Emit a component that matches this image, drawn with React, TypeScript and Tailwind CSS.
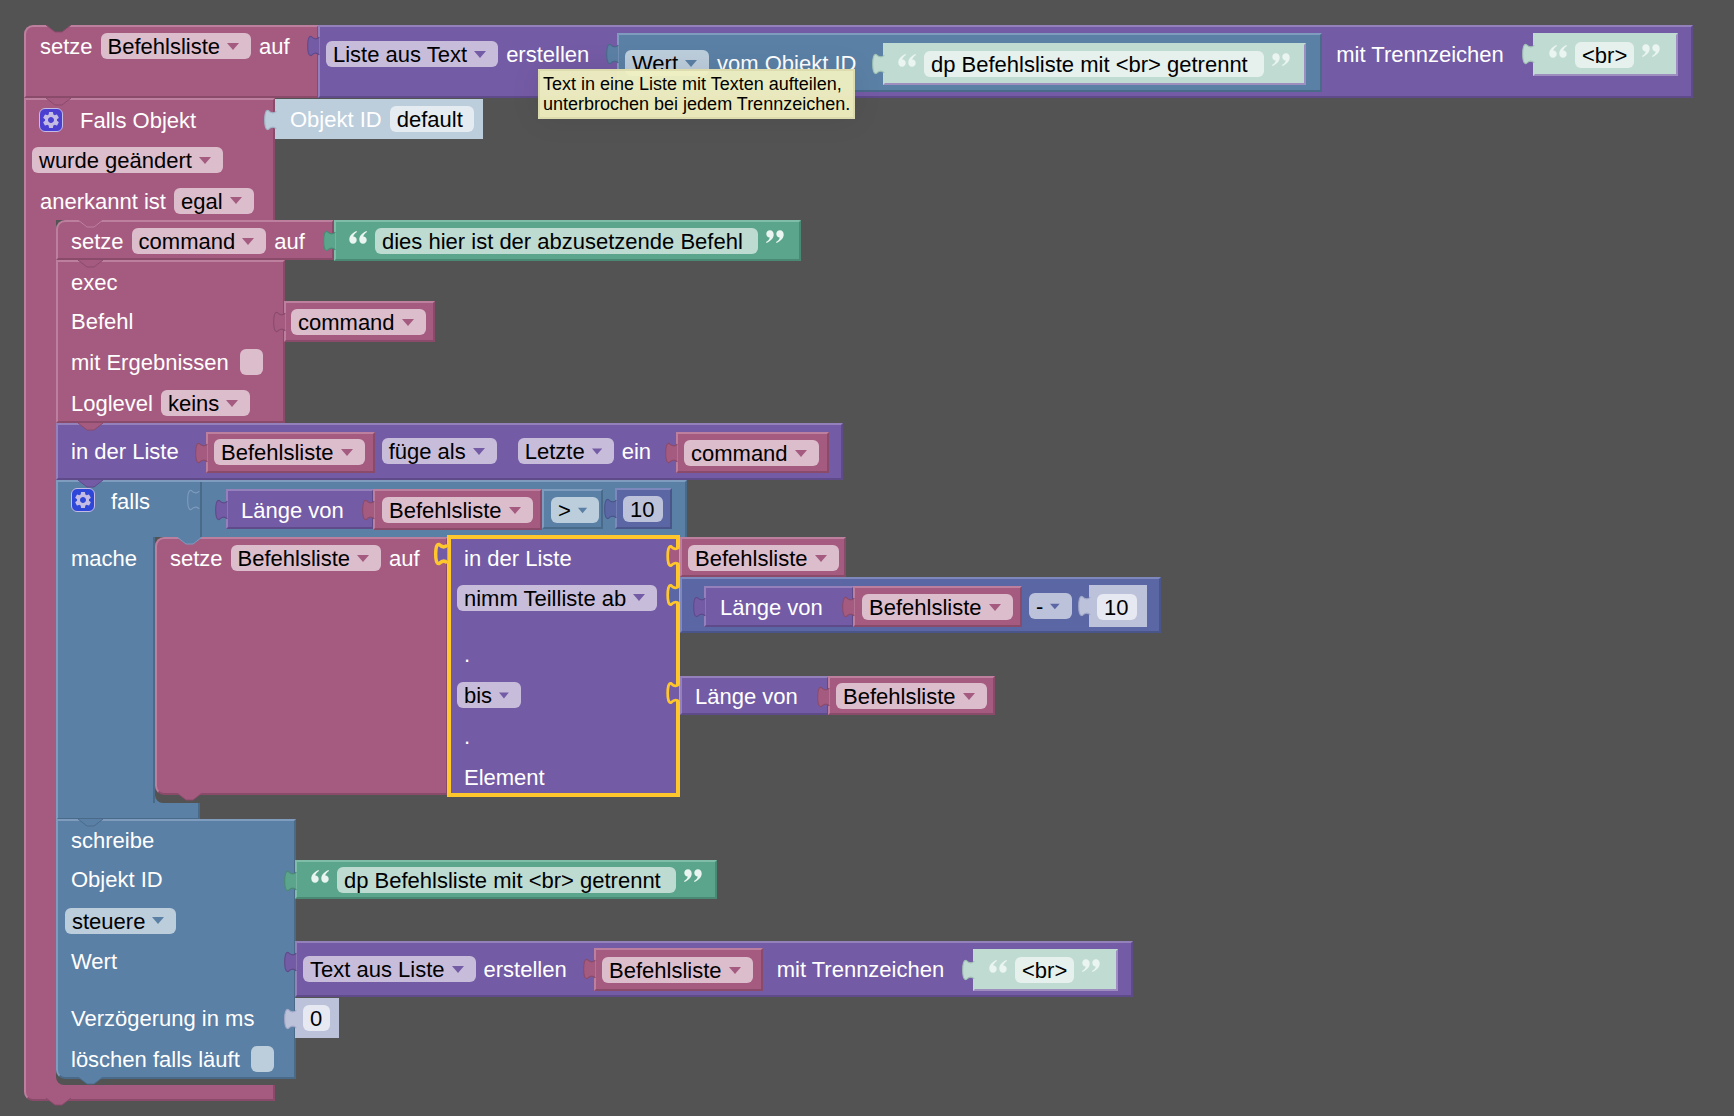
import type { ReactNode } from 'react'
import { MdSettings } from 'react-icons/md'

type Tone = 'pink' | 'purple' | 'blue' | 'green' | 'math' | 'paleBlue' | 'paleGreen' | 'paleMath'

const tones: Record<Tone, string> = {
  pink: 'bg-[#a55b80] border-t-[#bd7f9e] border-l-[#bd7f9e] border-r-[#8a4b6b] border-b-[#8a4b6b]',
  purple: 'bg-[#745ba5] border-t-[#9480bb] border-l-[#9480bb] border-r-[#5f4a8a] border-b-[#5f4a8a]',
  blue: 'bg-[#5b80a5] border-t-[#7f9bbd] border-l-[#7f9bbd] border-r-[#4a6a8a] border-b-[#4a6a8a]',
  green: 'bg-[#5ba58c] border-t-[#7fbda8] border-l-[#7fbda8] border-r-[#4a8a74] border-b-[#4a8a74]',
  math: 'bg-[#5b67a5] border-t-[#7f88bd] border-l-[#7f88bd] border-r-[#4a558a] border-b-[#4a558a]',
  paleBlue: 'bg-[#bccddc] border-t-[#bccddc] border-l-[#bccddc] border-r-[#bccddc] border-b-[#bccddc]',
  paleGreen: 'bg-[#c0dcd2] border-t-[#c0dcd2] border-l-[#c0dcd2] border-r-[#9d8ebf] border-b-[#9d8ebf]',
  paleMath: 'bg-[#bdc2db] border-t-[#bdc2db] border-l-[#bdc2db] border-r-[#bdc2db] border-b-[#bdc2db]',
}

const fills: Record<Tone, string> = {
  pink: '#a55b80',
  purple: '#745ba5',
  blue: '#5b80a5',
  green: '#5ba58c',
  math: '#5b67a5',
  paleBlue: '#bccddc',
  paleGreen: '#c0dcd2',
  paleMath: '#bdc2db',
}

const edges: Record<Tone, string> = {
  pink: '#8a4b6b',
  purple: '#5f4a8a',
  blue: '#4a6a8a',
  green: '#4a8a74',
  math: '#4a558a',
  paleBlue: '#9fb4c6',
  paleGreen: '#9fc0b3',
  paleMath: '#a0a6c6',
}

const fieldBg = {
  pink: 'bg-[#dcbdcc]',
  purple: 'bg-[#c7bddb]',
  blue: 'bg-[#bccddc]',
  math: 'bg-[#bdc2db]',
}

function Txt({ children, className = '' }: { children: ReactNode; className?: string }) {
  return <span className={`inline-block shrink-0 whitespace-nowrap pt-[2px] text-white ${className}`}>{children}</span>
}

function Drop({ label, tone, className = '' }: { label: string; tone: keyof typeof fieldBg; className?: string }) {
  return (
    <div className={`flex h-[26px] shrink-0 items-center gap-[7px] rounded-[6px] pl-[7px] pr-[12px] text-black ${fieldBg[tone]} ${className}`}>
      <span className="whitespace-nowrap pt-[2px]">{label}</span>
      <svg width="12" height="7" viewBox="0 0 12 7">
        <path d="M0 0h12L6 7z" fill={fills[tone]} />
      </svg>
    </div>
  )
}

function Input({ label, className = '' }: { label: string; className?: string }) {
  return <div className={`flex h-[26px] shrink-0 items-center whitespace-nowrap rounded-[6px] pl-[7px] pt-[2px] text-black ${className}`}>{label}</div>
}

function Check({ className = '' }: { className?: string }) {
  return <div className={`h-[26px] w-[23px] shrink-0 rounded-[6px] ${className}`} />
}

function Quote({ close = false }: { close?: boolean }) {
  const mark = 'M7.500 1C3 3 .3 6 .3 9.500c0 2.500 1.500 4.200 3.700 4.200s3.700-1.700 3.700-3.700-1.500-3.400-3.400-3.400C4.500 5 5.800 3.200 8 2z'
  return (
    <svg width="18" height="14" viewBox="0 0 18 14" className={`mt-[2px] shrink-0 ${close ? 'rotate-180' : ''}`} fill="#eaf4f0">
      <path d={mark} />
      <path transform="translate(10)" d={mark} />
    </svg>
  )
}

// left puzzle tab, sits on the parent block
function Tab({ fill, stroke, width = 0.8, className = '-left-[13px] top-[8px]' }: { fill: string; stroke: string; width?: number; className?: string }) {
  const d = 'M0,1 C-2,3 -4,2.500 -6,.5 C-8,0 -8.500,4 -8.500,7.500 C-8.500,11 -8,15 -6,14.500 C-4,12.500 -2,12 0,14'
  return (
    <svg className={`absolute overflow-visible ${className}`} width="13" height="22" viewBox="-9 -0.500 9.500 16">
      <path d={d} fill={fill} />
      <path d={d} fill="none" stroke={stroke} strokeWidth={width} />
    </svg>
  )
}

// the notch on a statement block is really the tab of the block above
function Notch({ fill, stroke, className = 'left-[20px] -top-[2px]' }: { fill: string; stroke: string; className?: string }) {
  return (
    <svg className={`absolute ${className}`} width="25" height="9" viewBox="0 0 25 9">
      <polygon points="0,0 9,7 16,7 25,0" fill={fill} />
      <polyline points="0,0 9,7 16,7 25,0" fill="none" stroke={stroke} strokeWidth="1" />
    </svg>
  )
}

function Block({ tone, className = '', tab = false, children }: { tone: Tone; className?: string; tab?: boolean; children?: ReactNode }) {
  return (
    <div className={`absolute border-2 ${tones[tone]} ${className}`}>
      {tab && <Tab fill={fills[tone]} stroke={edges[tone]} />}
      {children}
    </div>
  )
}

function Gear({ className }: { className: string }) {
  return (
    <div className={`flex h-[24px] w-[24px] shrink-0 items-center justify-center rounded-[6px] border-[1.500px] border-[#c5bce4] ${className}`}>
      <MdSettings size={20} color="#c5bce4" />
    </div>
  )
}

const row = 'flex items-center gap-2'
const valueRow = 'flex items-start gap-2'

export default function App() {
  return (
    <div className="relative h-[1116px] w-[1734px] overflow-hidden bg-[#535353] font-['Liberation_Sans',Arial,sans-serif] text-[22px] leading-none">
      {/* top stack: setze Befehlsliste auf ... */}
      <Block tone="pink" className="left-[24px] top-[25px] h-[73px] w-[295px] rounded-tl-[9px]">
        <Notch fill="#535353" stroke="#8a4b6b" />
        <div className={`${row} pl-[14px] pt-[6px]`}>
          <Txt>setze</Txt>
          <Drop label="Befehlsliste" tone="pink" />
          <Txt>auf</Txt>
        </div>
      </Block>
      <Block tone="purple" tab className="left-[318px] top-[25px] h-[73px] w-[1375px]">
        <div className={`${row} pl-[6px] pt-[14px]`}>
          <Drop label="Liste aus Text" tone="purple" />
          <Txt>erstellen</Txt>
          <Txt className="ml-[739px]">mit Trennzeichen</Txt>
        </div>
      </Block>
      <Block tone="blue" tab className="left-[617px] top-[33px] h-[59px] w-[705px]">
        <div className={`${row} pl-[6px] pt-[15px]`}>
          <Drop label="Wert" tone="blue" />
          <Txt>vom Objekt ID</Txt>
        </div>
      </Block>
      <Block tone="paleGreen" tab className="left-[883px] top-[43px] h-[42px] w-[423px]">
        <div className={`${valueRow} pl-[13px] pt-[6px]`}>
          <Quote />
          <Input label="dp Befehlsliste mit <br> getrennt" className="bg-[#e6f1ed] pr-[16px]" />
          <Quote close />
        </div>
      </Block>
      <Block tone="paleGreen" tab className="left-[1533px] top-[33px] h-[43px] w-[145px]">
        <div className={`${valueRow} pl-[14px] pt-[7px]`}>
          <Quote />
          <Input label="<br>" className="bg-[#e6f1ed] pr-[7px]" />
          <Quote close />
        </div>
      </Block>

      {/* Falls Objekt trigger, head + stem + foot */}
      <div className="absolute left-[24px] top-[98px] flex flex-col">
        <div className={`relative h-[122px] w-[251px] border-2 border-b-0 ${tones.pink}`}>
          <Notch fill="#a55b80" stroke="#8a4b6b" />
          <div className="flex h-[40px] items-center pl-[13px]">
            <Gear className="bg-[#4a3fd0]" />
            <Txt className="ml-[17px]">Falls Objekt</Txt>
          </div>
          <div className="flex h-[40px] items-center pl-[6px]">
            <Drop label="wurde geändert" tone="pink" />
          </div>
          <div className={`${row} h-[41px] pl-[14px]`}>
            <Txt>anerkannt ist</Txt>
            <Drop label="egal" tone="pink" />
          </div>
        </div>
        <div className={`h-[865px] w-[32px] border-2 border-y-0 border-r-0 ${tones.pink}`} />
        <div className={`relative h-[16px] w-[251px] rounded-bl-[9px] border-2 border-t-0 ${tones.pink}`}>
          <Notch fill="#a55b80" stroke="#8a4b6b" className="left-[20px] top-[13px]" />
          {/* inner corner of the C shape */}
          <div className="absolute -top-[8px] left-[30px] h-[8px] w-[8px] bg-[#a55b80]">
            <div className="h-full w-full rounded-bl-[8px] bg-[#535353]" />
          </div>
        </div>
      </div>
      <Block tone="paleBlue" tab className="left-[275px] top-[99px] h-[40px] w-[208px]">
        <div className={`${row} pl-[13px] pt-[5px]`}>
          <Txt>Objekt ID</Txt>
          <Input label="default" className="bg-[#e4ebf1] pr-[11px]" />
        </div>
      </Block>

      {/* setze command */}
      <Block tone="pink" className="left-[56px] top-[220px] h-[40px] w-[278px] rounded-tl-[9px]">
        <Notch fill="#a55b80" stroke="#bd7f9e" />
        <div className={`${row} pl-[13px] pt-[6px]`}>
          <Txt>setze</Txt>
          <Drop label="command" tone="pink" />
          <Txt>auf</Txt>
        </div>
      </Block>
      <Block tone="green" tab className="left-[334px] top-[220px] h-[41px] w-[467px]">
        <div className={`${valueRow} pl-[13px] pt-[6px]`}>
          <Quote />
          <Input label="dies hier ist der abzusetzende Befehl" className="bg-[#bddbd1] pr-[15px]" />
          <Quote close />
        </div>
      </Block>

      {/* exec */}
      <Block tone="pink" className="left-[56px] top-[260px] h-[163px] w-[229px]">
        <Notch fill="#a55b80" stroke="#8a4b6b" />
        <div className="flex flex-col pl-[13px]">
          <div className={`${row} h-[39px]`}><Txt>exec</Txt></div>
          <div className={`${row} h-[40px]`}><Txt>Befehl</Txt></div>
          <div className={`${row} h-[42px]`}>
            <Txt>mit Ergebnissen</Txt>
            <Check className="ml-[3px] bg-[#dcbdcc]" />
          </div>
          <div className={`${row} h-[40px]`}>
            <Txt>Loglevel</Txt>
            <Drop label="keins" tone="pink" />
          </div>
        </div>
      </Block>
      <Block tone="pink" tab className="left-[284px] top-[301px] h-[41px] w-[151px]">
        <div className="flex pl-[5px] pt-[6px]"><Drop label="command" tone="pink" /></div>
      </Block>

      {/* in der Liste fuege als Letzte ein */}
      <Block tone="purple" className="left-[56px] top-[423px] h-[57px] w-[787px]">
        <Notch fill="#a55b80" stroke="#8a4b6b" />
        <div className={`${row} pl-[13px] pt-[13px]`}>
          <Txt>in der Liste</Txt>
          <Drop label="füge als" tone="purple" className="ml-[195px]" />
          <Drop label="Letzte" tone="purple" className="ml-[13px] w-[96px]" />
          <Txt>ein</Txt>
        </div>
      </Block>
      <Block tone="pink" tab className="left-[206px] top-[432px] h-[41px] w-[169px]">
        <div className="flex pl-[6px] pt-[5px]"><Drop label="Befehlsliste" tone="pink" /></div>
      </Block>
      <Block tone="pink" tab className="left-[676px] top-[432px] h-[41px] w-[153px]">
        <div className="flex pl-[6px] pt-[6px]"><Drop label="command" tone="pink" /></div>
      </Block>

      {/* falls ... mache */}
      <div className="absolute left-[56px] top-[480px] flex flex-col">
        <div className={`relative h-[57px] w-[631px] border-2 border-b-0 ${tones.blue}`}>
          <Notch fill="#745ba5" stroke="#5f4a8a" />
          <div className="absolute left-[142px] top-0 h-[55px] w-[2px] bg-[#4a6a8a]" />
          <Tab fill="#5b80a5" stroke="#7f9bbd" className="left-[129px] top-[7px]" />
          <div className="flex items-center pl-[13px] pt-[5px]">
            <Gear className="bg-[#2e47d8]" />
            <Txt className="ml-[16px] mt-[2px]">falls</Txt>
          </div>
          <div className="pl-[13px] pt-[33px]"><Txt>mache</Txt></div>
        </div>
        <div className={`h-[266px] w-[99px] border-2 border-y-0 ${tones.blue}`} />
        <div className={`relative h-[17px] w-[144px] border-2 border-t-0 ${tones.blue}`}>
          <div className="absolute -top-[8px] left-[97px] h-[8px] w-[8px] bg-[#5b80a5]">
            <div className="h-full w-full rounded-bl-[8px] bg-[#535353]" />
          </div>
        </div>
      </div>
      <Block tone="purple" tab className="left-[226px] top-[489px] h-[40px] w-[148px]">
        <div className="pl-[13px] pt-[7px]"><Txt>Länge von</Txt></div>
      </Block>
      <Block tone="pink" tab className="left-[373px] top-[489px] h-[41px] w-[169px]">
        <div className="flex pl-[7px] pt-[6px]"><Drop label="Befehlsliste" tone="pink" /></div>
      </Block>
      <Block tone="blue" className="left-[542px] top-[489px] flex h-[40px] w-[61px] border-0">
        <Drop label=">" tone="blue" className="ml-[7px] mt-[6px] w-[48px]" />
      </Block>
      <Block tone="math" tab className="left-[615px] top-[488px] flex h-[41px] w-[57px]">
        <Input label="10" className="ml-[6px] mt-[6px] w-[40px] bg-[#bdc2db]" />
      </Block>

      {/* setze Befehlsliste auf in der Liste ... */}
      <Block tone="pink" className="left-[155px] top-[537px] h-[258px] w-[293px] rounded-l-[9px]">
        <Notch fill="#5b80a5" stroke="#7f9bbd" className="left-[20px] -top-[2px]" />
        <Notch fill="#a55b80" stroke="#8a4b6b" className="left-[20px] top-[254px]" />
        <div className={`${row} pl-[13px] pt-[6px]`}>
          <Txt>setze</Txt>
          <Drop label="Befehlsliste" tone="pink" />
          <Txt>auf</Txt>
        </div>
      </Block>
      <div className="absolute left-[447px] top-[535px] flex h-[262px] w-[233px] flex-col border-4 border-[#ffc72c] bg-[#745ba5] pl-[6px]">
        <Tab fill="#745ba5" stroke="#ffc72c" width={2.500} className="-left-[16px] top-[4px]" />
        <div className="flex h-[38px] items-center pl-[7px]"><Txt>in der Liste</Txt></div>
        <div className="flex h-[41px] items-center"><Drop label="nimm Teilliste ab" tone="purple" /></div>
        <div className="flex h-[57px] items-center pl-[7px] pt-[15px]"><Txt>.</Txt></div>
        <div className="flex h-[40px] items-center"><Drop label="bis" tone="purple" className="w-[64px]" /></div>
        <div className="flex h-[42px] items-center pl-[7px]"><Txt>.</Txt></div>
        <div className="flex h-[36px] items-center pl-[7px] pt-[4px]"><Txt>Element</Txt></div>
      </div>

      {/* inputs hanging on the selected block */}
      <Block tone="pink" className="left-[680px] top-[537px] h-[40px] w-[166px]">
        <Tab fill="#a55b80" stroke="#ffc72c" width={2} className="-left-[15px] top-[6px]" />
        <div className="flex pl-[6px] pt-[6px]"><Drop label="Befehlsliste" tone="pink" /></div>
      </Block>
      <Block tone="math" className="left-[680px] top-[577px] h-[56px] w-[481px]">
        <Tab fill="#5b67a5" stroke="#ffc72c" width={2} className="-left-[15px] top-[5px]" />
      </Block>
      <Block tone="purple" tab className="left-[704px] top-[586px] h-[41px] w-[150px]">
        <div className="pl-[14px] pt-[7px]"><Txt>Länge von</Txt></div>
      </Block>
      <Block tone="pink" tab className="left-[853px] top-[586px] h-[41px] w-[169px]">
        <div className="flex pl-[7px] pt-[6px]"><Drop label="Befehlsliste" tone="pink" /></div>
      </Block>
      <div className="absolute left-[1029px] top-[593px]"><Drop label="-" tone="math" className="w-[43px]" /></div>
      <Block tone="paleMath" tab className="left-[1089px] top-[585px] flex h-[42px] w-[58px]">
        <Input label="10" className="ml-[6px] mt-[7px] w-[40px] bg-[#e6e8f2]" />
      </Block>
      <Block tone="purple" className="left-[680px] top-[676px] h-[39px] w-[149px]">
        <Tab fill="#745ba5" stroke="#ffc72c" width={2} className="-left-[15px] top-[4px]" />
        <div className="pl-[13px] pt-[6px]"><Txt>Länge von</Txt></div>
      </Block>
      <Block tone="pink" tab className="left-[828px] top-[676px] h-[39px] w-[167px]">
        <div className="flex pl-[6px] pt-[5px]"><Drop label="Befehlsliste" tone="pink" /></div>
      </Block>

      {/* schreibe */}
      <Block tone="blue" className="left-[56px] top-[819px] h-[260px] w-[240px] rounded-bl-[9px]">
        <Notch fill="#5b80a5" stroke="#4a6a8a" />
        <Notch fill="#5b80a5" stroke="#4a6a8a" className="left-[20px] top-[256px]" />
        <div className="flex flex-col pl-[13px]">
          <div className="flex h-[38px] items-center"><Txt>schreibe</Txt></div>
          <div className="flex h-[40px] items-center"><Txt>Objekt ID</Txt></div>
          <div className="-ml-[6px] flex h-[42px] items-center"><Drop label="steuere" tone="blue" className="mt-[1px]" /></div>
          <div className="flex h-[40px] items-center"><Txt>Wert</Txt></div>
          <div className="flex h-[57px] items-start pt-[25px]"><Txt>Verzögerung in ms</Txt></div>
          <div className={`${row} mt-[2px] h-[38px]`}>
            <Txt>löschen falls läuft</Txt>
            <Check className="ml-[3px] bg-[#bccddc]" />
          </div>
        </div>
      </Block>
      <Block tone="green" tab className="left-[295px] top-[860px] h-[39px] w-[422px]">
        <div className={`${valueRow} pl-[14px] pt-[5px]`}>
          <Quote />
          <Input label="dp Befehlsliste mit <br> getrennt" className="bg-[#bddbd1] pr-[15px]" />
          <Quote close />
        </div>
      </Block>
      <Block tone="purple" tab className="left-[295px] top-[941px] h-[56px] w-[838px]">
        <div className={`${row} pl-[6px] pt-[13px]`}>
          <Drop label="Text aus Liste" tone="purple" />
          <Txt>erstellen</Txt>
          <Txt className="ml-[202px]">mit Trennzeichen</Txt>
        </div>
      </Block>
      <Block tone="pink" tab className="left-[594px] top-[948px] h-[43px] w-[169px]">
        <div className="flex pl-[6px] pt-[7px]"><Drop label="Befehlsliste" tone="pink" /></div>
      </Block>
      <Block tone="paleGreen" tab className="left-[973px] top-[949px] h-[42px] w-[145px]">
        <div className={`${valueRow} pl-[14px] pt-[6px]`}>
          <Quote />
          <Input label="<br>" className="bg-[#e6f1ed] pr-[7px]" />
          <Quote close />
        </div>
      </Block>
      <Block tone="paleMath" tab className="left-[295px] top-[998px] flex h-[40px] w-[44px]">
        <Input label="0" className="ml-[6px] mt-[5px] w-[27px] bg-[#e6e8f2]" />
      </Block>

      {/* tooltip over everything */}
      <div className="absolute left-[538px] top-[69px] h-[50px] w-[317px] whitespace-nowrap border-2 border-[#dcdcae] bg-[#f0f0c0]/95 px-[3px] pt-[3px] text-[18px] leading-[20px] text-black shadow-[0_0_30px_rgba(0,0,0,0.08)]">
        Text in eine Liste mit Texten aufteilen,
        <br />
        unterbrochen bei jedem Trennzeichen.
      </div>
    </div>
  )
}
